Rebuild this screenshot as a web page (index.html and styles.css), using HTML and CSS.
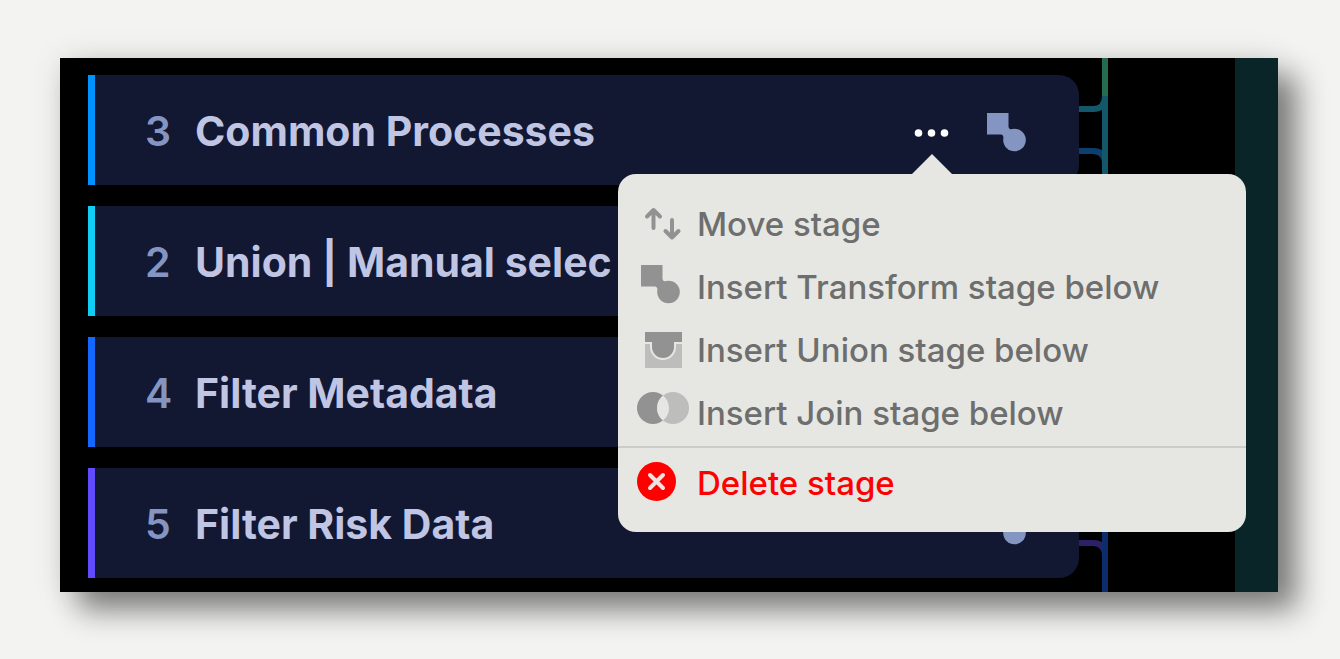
FILE: index.html
```html
<!DOCTYPE html>
<html lang="en">
<head>
  <meta charset="UTF-8">
  <title>Stages</title>
  <link rel="stylesheet" href="styles.css">
</head>
<body>
  <svg class="defs" aria-hidden="true">
    <symbol id="transform" viewBox="0 0 39 39">
      <path d="M0 0H21.5V14Q22 16 24 16.5L16.5 24.500Q16 21.500 14 21.500H0Z"/>
      <circle cx="27.500" cy="27" r="11.300"/>
    </symbol>
  </svg>

  <main class="panel">
    <ol class="stages">
      <li class="stage blue">
        <span class="number">3</span>
        <span class="title">Common Processes</span>
        <button class="more" aria-label="Stage menu" aria-expanded="true">
          <svg width="36" height="10" viewBox="0 0 36 10"><circle cx="4.500" cy="5" r="3.800"/><circle cx="17.500" cy="5" r="3.800"/><circle cx="30.500" cy="5" r="3.800"/></svg>
        </button>
        <svg class="type"><use href="#transform"/></svg>

        <div class="menu">
          <button class="item">
            <svg class="icon" viewBox="0 0 52 43"><path class="line" d="M16.500 26V8M10 14.500L16.500 8L23 14.500M35 18V35.500M28.500 29L35 35.500L41.500 29"/></svg>
            Move stage
          </button>
          <button class="item">
            <svg class="icon" viewBox="0 0 52 43"><use href="#transform" x="4" y="0" width="39" height="39"/></svg>
            Insert Transform stage below
          </button>
          <button class="item">
            <svg class="icon" viewBox="0 0 52 43"><path class="light" d="M8 16H13V19A13 13 0 0 0 39 19V16H45V40H8Z"/><path d="M8 4H45V14H37V19A11 11 0 0 1 15 19V14H8Z"/></svg>
            Insert Union stage below
          </button>
          <button class="item">
            <svg class="icon" viewBox="0 0 52 43"><circle cx="16" cy="17" r="16"/><circle class="light" cx="36" cy="17" r="16"/><path class="lens" d="M26 4.500A16 16 0 0 1 26 29.500A16 16 0 0 1 26 4.500Z"/></svg>
            Insert Join stage below
          </button>
          <hr>
          <button class="item delete">
            <svg class="icon" viewBox="0 0 52 43"><circle cx="19.500" cy="20.500" r="19.500"/><path class="cross" d="M13 14L26 27M26 14L13 27"/></svg>
            Delete stage
          </button>
        </div>
      </li>
      <li class="stage cyan">
        <span class="number">2</span>
        <span class="title">Union | Manual selec</span>
      </li>
      <li class="stage royal">
        <span class="number">4</span>
        <span class="title">Filter Metadata</span>
      </li>
      <li class="stage violet">
        <span class="number">5</span>
        <span class="title">Filter Risk Data</span>
        <svg class="type"><use href="#transform"/></svg>
      </li>
    </ol>

    <svg class="wires" viewBox="0 0 29 534" preserveAspectRatio="xMinYMin">
      <path stroke="#0c3f70" d="M0 93H14Q26 93 26 106"/>
      <path stroke="#2c2068" d="M0 485H14Q26 485 26 498"/>
      <path stroke="#256b50" d="M26 0V40"/>
      <path stroke="#12586a" d="M0 51H14Q26 51 26 38V120"/>
      <path stroke="#0c2d6b" d="M26 120V534"/>
    </svg>
    <div class="band"></div>
  </main>
</body>
</html>
```

FILE: styles.css
```css
* { box-sizing: border-box; }
body {
  margin: 0;
  padding: 58px 62px 67px 60px;
  background: #f3f3f1;
  font-family: Inter, "Liberation Sans", sans-serif;
}
.defs { position: absolute; width: 0; height: 0; }
.panel {
  display: flex;
  background: #000;
  box-shadow: 19px 18px 28px rgba(0, 0, 0, 0.47), 0 0 30px rgba(0, 0, 0, 0.1);
}

/* stages */
.stages {
  flex: 1;
  display: flex;
  flex-direction: column;
  gap: 21px;
  margin: 0;
  padding: 17px 0 14px 28px;
  list-style: none;
}
.stage {
  position: relative;
  display: flex;
  align-items: center;
  height: 110px;
  padding: 5px 53px 0 50px;
  border-left: 7px solid;
  border-radius: 0 20px 20px 0;
  background: #121732;
}
.blue { border-color: #0093ff; }
.cyan { border-color: #10cdf5; }
.royal { border-color: #1268ff; }
.violet { border-color: #604bff; }
.number, .title { padding-bottom: 4px; font-size: 41px; font-weight: 700; line-height: 48px; }
.number { width: 50px; color: #8595c2; font-weight: 600; }
.title { flex: 1; color: #bfc5e3; white-space: nowrap; }
.type { width: 39px; height: 39px; fill: #8595c2; }
button { border: 0; background: none; font: inherit; cursor: pointer; }
.more { margin-right: 37px; padding: 8px 0; line-height: 0; fill: #fff; }

/* popup menu */
.menu {
  position: absolute;
  z-index: 1;
  top: 99px;
  right: -167px;
  width: 628px;
  padding: 18px 0;
  border-radius: 18px;
  background: #e6e7e2;
}
.menu::before {
  content: "";
  position: absolute;
  top: -20px;
  left: 294px;
  border: 20px solid transparent;
  border-top: 0;
  border-bottom-color: #e6e7e2;
}
.item {
  display: flex;
  align-items: center;
  gap: 8px;
  width: 100%;
  height: 63px;
  padding: 0 19px;
  color: #6d6e6d;
  font-size: 33px;
  font-weight: 500;
  text-align: left;
  white-space: nowrap;
}
.icon { flex: none; width: 52px; height: 43px; fill: #929292; }
.light { fill: #bdbebc; }
.lens { fill: #e6e7e2; }
.line, .cross { fill: none; stroke: #929292; stroke-width: 4; stroke-linecap: round; stroke-linejoin: round; }
.cross { stroke: #e6e7e2; }
.menu hr { height: 2px; margin: 2px 0 3px; border: 0; background: #ccccca; }
.delete { color: #f00; }
.delete .icon { fill: #f00; }

/* connectors */
.wires { width: 29px; margin-right: 127px; fill: none; stroke-width: 6; }
.band { width: 43px; background: #0a2528; }
```
